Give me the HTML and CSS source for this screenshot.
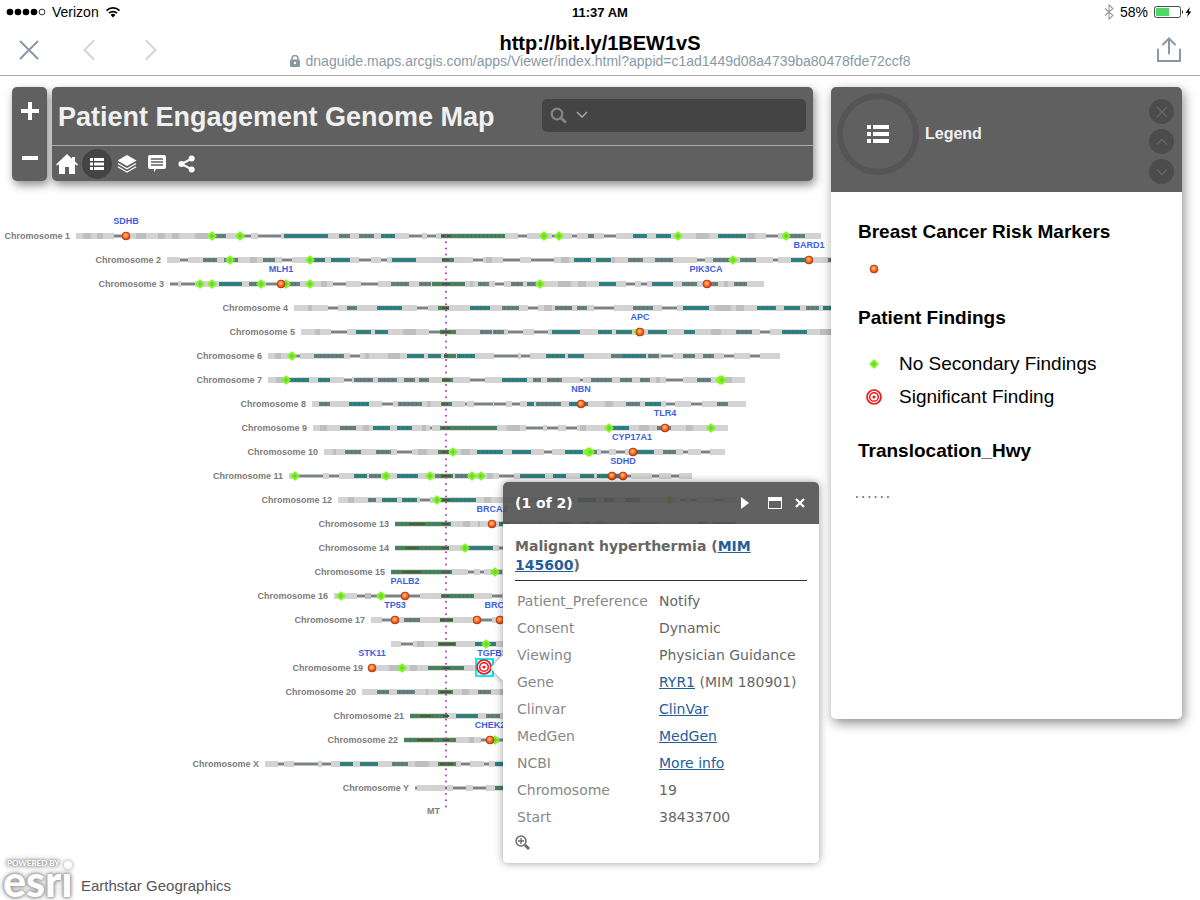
FILE: index.html
```
<!DOCTYPE html>
<html lang="en">
<head>
<meta charset="utf-8">
<title>Patient Engagement Genome Map</title>
<link rel="stylesheet" href="styles.css">
</head>

<body>

<div class="statusBar">
	<div class="statusLeft">
		<svg width="40" height="10" viewBox="0 0 40 10" aria-hidden="true">
			<circle cx="4" cy="5" r="3.3"/><circle cx="12" cy="5" r="3.3"/><circle cx="20" cy="5" r="3.3"/><circle cx="28" cy="5" r="3.3"/>
			<circle cx="36" cy="5" r="2.9" fill="none" stroke="#000" stroke-width="0.8"/>
		</svg>
		<span>Verizon</span>
		<svg width="16" height="12" viewBox="0 0 16 12" fill="none" stroke="#000" stroke-width="1.7" aria-hidden="true">
			<path d="M1.5 4.6a9.2 9.2 0 0 1 13 0M4 7.2a5.7 5.7 0 0 1 8 0"/>
			<path d="M8 11.4L5.6 9a3.4 3.4 0 0 1 4.8 0z" fill="#000" stroke="none"/>
		</svg>
	</div>
	<div class="clock">11:37 AM</div>
	<div class="statusRight">
		<svg width="10" height="16" viewBox="0 0 10 16" fill="none" stroke="#999" stroke-width="1.1" aria-hidden="true"><path d="M1 4.5l8 7L5 15V1l4 3.5-8 7"/></svg>
		<span>58%</span>
		<svg width="40" height="12" viewBox="0 0 40 12" aria-hidden="true">
			<rect x="0.5" y="0.5" width="26" height="11" rx="2" fill="#fff" stroke="#333" stroke-width="0.9"/>
			<rect x="2" y="2" width="13" height="8" fill="#4cd964"/>
			<path d="M28 4q2 2 0 4z"/>
			<path d="M36 1l-4.500 5.800h2.700l-1.200 4.500 4.300-5.900h-2.500z"/>
		</svg>
	</div>
</div>

<div class="browserBar">
	<div class="browserNav">
		<button type="button" class="iconButton" aria-label="Close"><svg width="20" height="20" viewBox="0 0 20 20"><path d="M1.500 1.500l17 17M18.500 1.500l-17 17"/></svg></button>
		<button type="button" class="iconButton faded" aria-label="Back"><svg width="12" height="20" viewBox="0 0 12 20"><path d="M10.500 1L1.500 10l9 9"/></svg></button>
		<button type="button" class="iconButton faded" aria-label="Forward"><svg width="12" height="20" viewBox="0 0 12 20"><path d="M1.500 1l9 9-9 9"/></svg></button>
	</div>
	<div class="browserTitle">
		<div class="shortUrl">http://bit.ly/1BEW1vS</div>
		<div class="fullUrl">
			<svg width="10" height="12" viewBox="0 0 10 12" aria-hidden="true"><path d="M2 5V3.500a3 3 0 0 1 6 0V5" fill="none" stroke="#8899a6" stroke-width="1.500"/><rect y="4.500" width="10" height="7.500" rx="1" fill="#8899a6"/><circle cx="5" cy="8" r="1.200" fill="#fff"/></svg>
			<span>dnaguide.maps.arcgis.com/apps/Viewer/index.html?appid=c1ad1449d08a4739ba80478fde72ccf8</span>
		</div>
	</div>
	<div class="browserShare">
		<button type="button" class="iconButton" aria-label="Share page"><svg width="24" height="26" viewBox="0 0 24 26"><path d="M1 12.500V24h22V12.500M12 16.500V2M6 7.500L12 1.500l6 6"/></svg></button>
	</div>
</div>

<div class="mapStage">

	<svg class="map" id="map" role="img" aria-label="Chromosome map">
		<defs>
			<radialGradient id="riskFill" cx="45%" cy="40%" r="60%">
				<stop offset="0" stop-color="#ffd08a"/><stop offset="0.45" stop-color="#ff8030"/><stop offset="1" stop-color="#e03010"/>
			</radialGradient>
			<symbol id="risk" viewBox="-5 -5 10 10"><circle r="3.900" fill="url(#riskFill)" stroke="#b83410" stroke-width="0.9"/></symbol>
			<symbol id="clear" viewBox="-5 -5 10 10"><path d="M0-3.600L3.600 0 0 3.600-3.600 0z" fill="#72c472" stroke="#7cfc0a" stroke-width="1.900"/></symbol>
			<symbol id="significant" viewBox="-8 -8 16 16"><circle r="7" fill="#fff" stroke="#f01818" stroke-width="1.700"/><circle r="4.300" fill="none" stroke="#f01818" stroke-width="1.500"/><circle r="1.600" fill="#f01818"/></symbol>
		</defs>
	</svg>

	<div class="overlay">
		<div class="zoomBox">
			<button type="button" class="zoomButton" aria-label="Zoom in"><svg width="20" height="20" viewBox="0 0 20 20"><path d="M1 10h18M10 1v18"/></svg></button>
			<button type="button" class="zoomButton" aria-label="Zoom out"><svg width="20" height="20" viewBox="0 0 20 20"><path d="M2 10h16"/></svg></button>
		</div>

		<div class="header">
			<div class="headerTop">
				<h1 class="pageTitle">Patient Engagement Genome Map</h1>
				<form class="search">
					<button type="button" class="iconButton" aria-label="Search"><svg width="17" height="17" viewBox="0 0 17 17" fill="none" stroke="#858585"><circle cx="7" cy="7" r="5.300" stroke-width="2.200"/><path d="M11 11l5 4.500" stroke-width="2.800"/></svg></button>
					<button type="button" class="iconButton" aria-label="Search options"><svg width="12" height="8" viewBox="0 0 12 8" fill="none" stroke="#b0b0b0" stroke-width="1.300"><path d="M1 1l5 5 5-5"/></svg></button>
					<input class="searchInput" type="text" aria-label="Find address or place">
				</form>
			</div>
			<div class="tools">
				<button type="button" class="tool" aria-label="Default extent"><svg width="22" height="20" viewBox="0 0 22 20"><path d="M11 0L0 10.500l1.200 1L3 10.200V20h6v-7h4v7h6v-9.800l1.800 1.300 1.200-1-3-3V3h-3v1.700z"/></svg></button>
				<button type="button" class="tool active" aria-label="Legend"><svg width="14" height="12" viewBox="0 0 14 12"><path d="M0 0h3v3H0zM4 0h10v3H4zM0 4.500h3v3H0zM4 4.500h10v3H4zM0 9h3v3H0zM4 9h10v3H4z"/></svg></button>
				<button type="button" class="tool" aria-label="Layers"><svg width="20" height="18" viewBox="0 0 20 18"><path d="M10 0l9.500 5.500L10 11 .5 5.500z"/><path d="M1 8.500l9 5.200 9-5.200M1 11.800l9 5.200 9-5.200" fill="none" stroke="#fff" stroke-width="1.300"/></svg></button>
				<button type="button" class="tool" aria-label="Details"><svg width="18" height="18" viewBox="0 0 18 18"><path d="M2 0h14q2 0 2 2v10q0 2-2 2H8l-2 3.500V14H2q-2 0-2-2V2q0-2 2-2z"/><path d="M3 4h12M3 7h12M3 10h12" stroke="#606060" stroke-width="1.300"/></svg></button>
				<button type="button" class="tool" aria-label="Share"><svg width="18" height="18" viewBox="0 0 18 18"><path d="M14 3.500L3.500 9 14 14.500" fill="none" stroke="#fff" stroke-width="2"/><circle cx="3.500" cy="9" r="3"/><circle cx="13.700" cy="3.500" r="3"/><circle cx="13.700" cy="14.500" r="3"/></svg></button>
			</div>
		</div>

		<div class="panel">
			<div class="panelHeader">
				<div class="panelBadge"><svg width="22" height="18" viewBox="0 0 22 18" fill="#fff" aria-hidden="true"><path d="M0 0h4v4H0zM6 0h16v4H6zM0 7h4v4H0zM6 7h16v4H6zM0 14h4v4H0zM6 14h16v4H6z"/></svg></div>
				<h2 class="panelTitle">Legend</h2>
				<div class="panelButtons">
					<button type="button" class="roundButton" aria-label="Close legend"><svg width="12" height="12" viewBox="0 0 12 12"><path d="M1 1l10 10M11 1L1 11"/></svg></button>
					<button type="button" class="roundButton" aria-label="Previous"><svg width="12" height="12" viewBox="0 0 12 12"><path d="M1 8.500l5-5 5 5"/></svg></button>
					<button type="button" class="roundButton" aria-label="Next"><svg width="12" height="12" viewBox="0 0 12 12"><path d="M1 3.500l5 5 5-5"/></svg></button>
				</div>
			</div>
			<div class="legend">
				<h3 class="legendTitle">Breast Cancer Risk Markers</h3>
				<div class="legendItem"><svg class="swatch" width="16" height="16" viewBox="0 0 16 16"><use href="#risk" x="3" y="3" width="10" height="10"/></svg></div>
				<h3 class="legendTitle">Patient Findings</h3>
				<div class="legendItem"><svg class="swatch" width="16" height="16" viewBox="0 0 16 16"><use href="#clear" x="3" y="3" width="10" height="10"/></svg>No Secondary Findings</div>
				<div class="legendItem"><svg class="swatch" width="16" height="16" viewBox="0 0 16 16"><use href="#significant" width="16" height="16"/></svg>Significant Finding</div>
				<h3 class="legendTitle">Translocation_Hwy</h3>
				<div class="legendItem"><svg width="34" height="4" viewBox="0 0 34 4"><path class="highway" d="M1 2h32"/></svg></div>
			</div>
		</div>
	</div>

	<div class="popup">
		<div class="popupHeader">
			<span class="popupCount">(1 of 2)</span>
			<button type="button" class="iconButton" aria-label="Next feature"><svg width="8" height="12" viewBox="0 0 8 12"><path d="M0 0l8 6-8 6z" fill="#fff"/></svg></button>
			<button type="button" class="iconButton" aria-label="Maximize"><svg width="14" height="12" viewBox="0 0 14 12"><path d="M0 0h14v12H0zM1 4v7h12V4z" fill="#fff" fill-rule="evenodd"/></svg></button>
			<button type="button" class="iconButton" aria-label="Close popup"><svg width="10" height="10" viewBox="0 0 10 10"><path d="M1 1l8 8M9 1L1 9" stroke="#fff" stroke-width="2.200"/></svg></button>
		</div>
		<div class="popupBody">
			<h2 class="popupTitle">Malignant hyperthermia (<a href="#mim">MIM 145600</a>)</h2>
			<table class="attributes">
				<tr><th scope="row">Patient_Preference</th><td>Notify</td></tr>
				<tr><th scope="row">Consent</th><td>Dynamic</td></tr>
				<tr><th scope="row">Viewing</th><td>Physician Guidance</td></tr>
				<tr><th scope="row">Gene</th><td><a href="#ryr1">RYR1</a> (MIM 180901)</td></tr>
				<tr><th scope="row">Clinvar</th><td><a href="#clinvar">ClinVar</a></td></tr>
				<tr><th scope="row">MedGen</th><td><a href="#medgen">MedGen</a></td></tr>
				<tr><th scope="row">NCBI</th><td><a href="#ncbi">More info</a></td></tr>
				<tr><th scope="row">Chromosome</th><td>19</td></tr>
				<tr><th scope="row">Start</th><td>38433700</td></tr>
			</table>
			<button type="button" class="iconButton" aria-label="Zoom to"><svg width="15" height="15" viewBox="0 0 15 15" fill="none" stroke="#6a6a6a"><circle cx="6" cy="6" r="5" stroke-width="1.500"/><path d="M3 6h6M6 3v6" stroke-width="1.300"/><path d="M10 10l4 4" stroke-width="2.800"/></svg></button>
		</div>
	</div>

	<div class="attribution">
		<div class="esriLogo">
			<span class="poweredBy">POWERED BY</span>
			<span class="esri">esr&#305;</span>
		</div>
		<span>Earthstar Geographics</span>
	</div>
</div>

<script src="map.js"></script>
</body>
</html>
```
FILE: styles.css
```
* {
	box-sizing: border-box;
}

body {
	margin: 0;
	min-height: 100vh;
	display: flex;
	flex-direction: column;
	background: #fff;
	color: #000;
	font-family: "Liberation Sans", Arial, Helvetica, sans-serif;
}

h1, h2, h3 {
	margin: 0;
}

svg {
	display: block;
	flex: none;
}

.iconButton {
	display: flex;
	padding: 0;
	border: 0;
	background: none;
}

/* device status bar */

.statusBar {
	display: grid;
	grid-template-columns: 1fr auto 1fr;
	align-items: center;
	height: 24px;
	padding: 0 6px;
	font-size: 14px;
}

.statusLeft, .statusRight {
	display: flex;
	align-items: center;
	gap: 6px;
}

.statusRight {
	justify-content: flex-end;
}

.clock {
	font-size: 13px;
	font-weight: bold;
}

/* browser bar */

.browserBar {
	display: grid;
	grid-template-columns: 1fr auto 1fr;
	align-items: center;
	height: 52px;
	padding: 0 19px;
	border-bottom: 1px solid #aaa;
}

.browserNav {
	display: flex;
	gap: 50px;
}

.browserNav svg, .browserShare svg {
	fill: none;
	stroke: #8899a6;
	stroke-width: 2;
	stroke-linecap: round;
}

.browserNav .faded:nth-child(2) {
	margin-left: -6px;
}

.faded {
	opacity: 0.4;
}

.browserShare {
	display: flex;
	justify-content: flex-end;
}

.browserTitle {
	padding-top: 3px;
	text-align: center;
}

.shortUrl {
	font-size: 20px;
	line-height: 20px;
	font-weight: bold;
}

.fullUrl {
	display: flex;
	align-items: center;
	justify-content: center;
	gap: 6px;
	font-size: 14px;
	line-height: 16px;
	color: #8899a6;
}

/* map */

.mapStage {
	position: relative;
	flex: 1;
	display: flex;
	flex-direction: column;
	justify-content: space-between;
}

.map {
	position: absolute;
	inset: 0;
	width: 100%;
	height: 100%;
}

.highway {
	fill: none;
	stroke: #a83cc0;
	stroke-width: 2;
	stroke-linecap: round;
	stroke-dasharray: 0 6.2;
}

.chromosomeLabel, .geneLabel {
	font-size: 9px;
	font-weight: bold;
	fill: #7c7c7c;
	text-anchor: end;
}

.geneLabel {
	fill: #3c5fe0;
	text-anchor: middle;
}

.light { fill: #d3d3d3; }
.mid { fill: #bfbfbf; }
.gap { fill: #fff; }
.edge { fill: #dcdcdc; }
.thin { fill: #7c8484; }
.slate { fill: #667f7f; }
.teal { fill: #2f8080; }
.green { fill: #468560; }
.olive { fill: #4c5a2c; }
.selection { fill: #fff; stroke: #00f0ff; stroke-width: 2; }

.grain {
	stroke: #4a5c50;
	stroke-width: 1;
	stroke-dasharray: 1 3;
}

.overlay {
	position: relative;
	display: flex;
	align-items: flex-start;
	padding: 11px 18px 0 12px;
}

.zoomBox, .header {
	border-radius: 5px;
	background: #606060;
	box-shadow: 2px 4px 10px rgba(0, 0, 0, 0.45);
}

.zoomBox {
	display: flex;
	flex-direction: column;
	justify-content: space-between;
	width: 35px;
	height: 94px;
	margin-right: 5px;
}

.zoomButton {
	display: flex;
	align-items: center;
	justify-content: center;
	height: 47px;
	padding: 0 0 0 1px;
	border: 0;
	background: none;
}

.zoomButton svg {
	stroke: #fff;
	stroke-width: 4;
}

.header {
	flex: 1;
	margin-right: 18px;
}

.headerTop {
	display: flex;
	align-items: center;
	justify-content: space-between;
	height: 59px;
	padding: 0 7px 2px 6px;
	border-bottom: 1px solid #aaa;
}

.pageTitle {
	padding-top: 4px;
	font-size: 27px;
	color: #f0f0f0;
}

.search {
	display: flex;
	align-items: center;
	gap: 9px;
	width: 264px;
	height: 33px;
	padding: 0 8px;
	border-radius: 5px;
	background: #444;
}

.searchInput {
	flex: 1;
	min-width: 0;
	border: 0;
	background: none;
	color: #fff;
	font-size: 14px;
}

.tools {
	display: flex;
	align-items: center;
	height: 35px;
}

.tool {
	display: flex;
	align-items: center;
	justify-content: center;
	width: 30px;
	height: 30px;
	padding: 0;
	border: 0;
	border-radius: 50%;
	background: none;
	fill: #fff;
}

.tool.active {
	background: #444;
}

/* legend panel */

.panel {
	width: 351px;
	min-height: calc(100vh - 268px);
	border-radius: 5px;
	background: #fff;
	box-shadow: 2px 4px 12px rgba(0, 0, 0, 0.45);
}

.panelHeader {
	display: flex;
	height: 105px;
	padding: 6px;
	border-radius: 5px 5px 0 0;
	background: #606060;
}

.panelBadge {
	display: flex;
	align-items: center;
	justify-content: center;
	width: 82px;
	height: 82px;
	border: 6px solid #555;
	border-radius: 50%;
}

.panelTitle {
	flex: 1;
	padding-left: 6px;
	font-size: 16px;
	line-height: 82px;
	color: #f0f0f0;
}

.panelButtons {
	display: flex;
	flex-direction: column;
	gap: 5px;
	padding: 6px 2px 0 0;
}

.roundButton {
	display: flex;
	align-items: center;
	justify-content: center;
	width: 25px;
	height: 25px;
	padding: 0;
	border: 0;
	border-radius: 50%;
	background: #4c4c4c;
}

.roundButton svg {
	fill: none;
	stroke: #666;
	stroke-width: 1.4;
}

.legend {
	padding: 28px 25px;
}

.legendTitle {
	margin: 0 2px 8px;
	font-size: 19px;
	line-height: 24px;
}

.legendItem {
	display: flex;
	align-items: center;
	gap: 17px;
	height: 33px;
	font-size: 19px;
}

.legendItem + .legendTitle {
	margin-top: 21px;
	margin-bottom: 17px;
}

.legendTitle:last-of-type {
	margin-top: 26px;
}

.swatch {
	margin-left: 10px;
}

/* popup */

.popup {
	position: absolute;
	z-index: 1;
	left: 503px;
	top: 406px;
	width: 316px;
	border-radius: 5px;
	box-shadow: 0 0 8px rgba(0, 0, 0, 0.4);
	font-family: "DejaVu Sans", Verdana, sans-serif;
	font-size: 14px;
	color: #666;
}

/* pointer to the selected marker */
.popup::before {
	content: "";
	position: absolute;
	z-index: -1;
	left: -9px;
	top: 177px;
	width: 18px;
	height: 18px;
	background: #fff;
	box-shadow: 0 0 6px rgba(0, 0, 0, 0.4);
	transform: rotate(45deg);
}

.popupHeader {
	display: flex;
	align-items: center;
	gap: 13px;
	height: 42px;
	padding: 0 14px 0 12px;
	border-radius: 5px 5px 0 0;
	background: rgba(80, 80, 80, 0.9);
}

.popupHeader .iconButton:nth-child(2) {
	margin-right: 6px;
}

.popupCount {
	flex: 1;
	font-weight: bold;
	color: #fff;
}

.popupBody {
	padding: 13px 12px;
	border-radius: 0 0 5px 5px;
	background: #fff;
}

.popupTitle {
	padding-bottom: 5px;
	border-bottom: 1px solid #333;
	margin-bottom: 6px;
	font-size: 14px;
	line-height: 19px;
}

.popup a {
	color: #245d99;
}

.attributes {
	width: 100%;
	border-collapse: collapse;
}

.attributes th, .attributes td {
	height: 27px;
	padding: 0 0 0 2px;
	font-weight: normal;
	text-align: left;
	white-space: nowrap;
}

.attributes th {
	width: 142px;
	color: #888;
}

.popupBody > .iconButton {
	margin-top: 5px;
}

/* attribution */

.attribution {
	position: relative;
	display: flex;
	align-items: flex-end;
	gap: 8px;
	padding: 0 3px 5px;
	font-size: 15px;
	line-height: 18px;
	color: #555;
}

.esriLogo {
	position: relative;
	display: flex;
	flex-direction: column;
	width: 70px;
	font-family: Lato, sans-serif;
	font-weight: 900;
	color: #fff;
	text-shadow: 0 0 2px #999, 0 0 3px #999, 0 0 4px #aaa, 0 0 6px #aaa;
}

/* large dot of the logo's i */
.esriLogo::after {
	content: "";
	position: absolute;
	right: 1px;
	top: 2px;
	width: 8px;
	height: 8px;
	border-radius: 50%;
	background: #fff;
	box-shadow: 0 0 4px #888;
}

.poweredBy {
	padding-left: 4px;
	font-size: 8px;
	line-height: 8px;
}

.esri {
	font-size: 43px;
	line-height: 28px;
}
```
FILE: map.js
```
var SVG_NS = "http://www.w3.org/2000/svg";
var map = document.getElementById("map");
var FIRST_ROW = 160;
var ROW_STEP = 24;
var CENTROMERE = 446;

var bandTypes = {
	d: { name: "mid", height: 6 },
	s: { name: "thin", height: 3, back: "gap" },
	g: { name: "slate", height: 4, back: "edge", grain: true },
	t: { name: "teal", height: 4, back: "edge", grain: true },
	n: { name: "green", height: 4, back: "edge", grain: true },
	o: { name: "olive", height: 2 }
};

// each chromosome: name, start, end, bands (type start-end), clear markers, risk markers
var chromosomes = [
	["Chromosome 1", 76, 821, "d83-91 d97-103 s114-126 d136-146 d158-165 d172-179 d195-208 g209-226 s243-251 s258-281 t284-328 g339-350 g359-374 t381-395 s409-422 s427-436 n441-505 o441-451 s518-527 s552-556 s572-577 g588-594 s604-616 t633-647 t656-671 d696-709 t718-746 d748-755 s766-778 g789-805", [212, 240, 544, 559, 678, 786], [126]],
	["Chromosome 2", 167, 840, "s180-188 g203-217 g224-238 d250-257 g263-275 s282-292 t308-325 t331-350 s359-371 s381-387 t392-416 n442-454 o442-449 s473-483 d486-492 s503-520 s531-554 d561-569 t574-591 t596-611 d612-615 g628-643 g655-673 s697-705 g713-735 g740-756 s773-778 t791-808 g828-840", [230, 310, 733], [809]],
	["Chromosome 3", 170, 764, "s170-178 s181-195 t219-242 g249-262 s266-278 g285-300 d321-327 s333-346 s361-378 g391-409 g419-431 n432-465 o442-450 d470-473 g478-489 s495-504 g511-523 g527-536 d558-571 d578-586 t599-616 s626-635 s641-647 t652-673 g682-697 g709-718 d724-728 g734-747", [200, 212, 261, 286, 310, 540], [281, 707]],
	["Chromosome 4", 294, 840, "d308-312 s328-338 g347-357 t377-402 s417-428 n438-449 o442-449 t470-490 g502-519 s528-538 d544-552 g555-572 g577-587 s594-614 g633-653 s662-677 t683-709 d715-731 d736-744 t757-776 t784-800 g806-819 t823-840", [], []],
	["Chromosome 5", 301, 840, "d315-320 s331-347 t356-371 t375-388 d403-416 s429-440 n440-456 o441-451 g480-492 g493-504 s508-523 s534-548 t552-580 t598-612 t616-632 t648-667 t684-695 d711-721 g736-752 s760-770 t782-807 d820-831", [638], [640]],
	["Chromosome 6", 268, 780, "d275-281 s294-300 g314-344 s350-360 d365-369 d388-400 t407-424 t428-441 n444-456 o444-448 t457-475 s494-518 s521-530 t546-565 t568-584 g611-622 t622-646 g648-659 s661-673 g683-695 g703-714 s724-734 s750-760", [292], []],
	["Chromosome 7", 268, 745, "d276-283 t289-309 t318-330 s344-352 g354-373 g378-397 g404-415 g419-429 n442-453 o442-450 s470-485 t502-527 g533-541 g547-562 s580-583 g591-612 g620-632 g640-650 d656-660 s666-683 g697-711 d725-732", [286, 720, 722], []],
	["Chromosome 8", 312, 746, "g319-330 t349-369 s382-393 g398-422 d427-431 n441-452 o442-448 s465-467 s474-493 s494-506 s512-520 t527-534 g536-561 t569-588 d605-613 g626-640 t645-661 s666-675 s691-702 g717-728", [], [581]],
	["Chromosome 9", 313, 728, "d320-327 g340-356 d363-369 t373-390 t397-412 d422-426 s430-432 n440-497 o442-450 d507-520 s526-543 s547-558 s566-577 d580-586 t609-629 d639-649 g657-671 d686-693", [609, 711], [665]],
	["Chromosome 10", 324, 725, "d333-336 g345-361 g376-391 s397-412 d418-427 n438-449 o442-449 d461-470 t477-503 t512-531 s544-552 t565-583 g590-597 s601-609 s616-625 t635-654 g663-676 s683-688 s701-710", [453, 588, 590], [633]],
	["Chromosome 11", 289, 692, "s297-323 s329-339 t354-367 g369-381 t397-418 g435-441 n441-453 o441-451 g455-468 d487-493 s499-514 t520-545 t553-566 t580-594 t597-620 s624-631 s652-659 s671-679", [295, 386, 430, 472, 481], [612, 623]],
	["Chromosome 12", 338, 737, "d348-354 g368-376 t382-397 t402-417 s420-430 n438-450 o442-450 t450-476 d484-491 t578-596 g604-614 g625-640 s680-686 s691-697 s714-724", [437, 670], []],
	["Chromosome 13", 395, 737, "n395-451 o409-425 o442-449 d463-470 d478-480 t499-510 g559-572 g580-590 g595-605 g631-660 g698-707 g713-735", [540], [492]],
	["Chromosome 14", 395, 520, "n395-449 o405-419 o442-449 t468-493 s499-503", [465], []],
	["Chromosome 15", 391, 520, "n391-452 o402-421 o442-450 s468-474 s480-484 g491-502", [495], []],
	["Chromosome 16", 334, 520, "s357-365 d365-371 s371-377 s384-420 n441-474 o442-449 s492-502", [341, 381], [405]],
	["Chromosome 17", 371, 520, "s382-391 g404-420 n440-453 o440-453 s478-492", [], [395, 477, 500]],
	["", 391, 520, "s401-413 d417-424 n438-456 o439-455 t475-496", [486], []],
	["Chromosome 19", 369, 492, "d389-400 d410-417 n428-464 o442-450", [402], [372, 490]],
	["Chromosome 20", 362, 520, "g377-389 g397-415 d426-428 n438-453 o440-451 d462-469 g478-491 d500-510", [], []],
	["Chromosome 21", 410, 520, "n410-448 o420-431 o443-449 t456-478 g486-500", [], []],
	["Chromosome 22", 404, 520, "n404-456 o417-433 o443-449 d469-474 s481-493 s499-510", [495], [490]],
	["Chromosome X", 265, 520, "s278-284 s294-318 s322-331 t340-353 t360-378 g392-408 d415-429 n438-456 o440-453 s461-470 s484-489 t495-510", [], []],
	["Chromosome Y", 415, 520, "s415-417 s445-447 s453-466 s473-486 n495-510", [], []]
];

// gene name, x, row of its chromosome
var genes = [
	["SDHB", 126, 0], ["BARD1", 809, 1], ["MLH1", 281, 2], ["PIK3CA", 706, 2],
	["APC", 640, 4], ["NBN", 581, 7], ["TLR4", 665, 8], ["CYP17A1", 632, 9],
	["SDHD", 623, 10], ["BRCA2", 492, 12], ["PALB2", 405, 15], ["TP53", 395, 16],
	["BRCA1", 500, 16], ["STK11", 372, 18], ["TGFB1", 492, 18], ["CHEK2", 490, 21]
];

function add(tag, attributes, text) {
	var node = document.createElementNS(SVG_NS, tag);
	for (var key in attributes) {
		node.setAttribute(key, attributes[key]);
	}
	if (text) {
		node.textContent = text;
	}
	map.appendChild(node);
}

function bar(name, start, end, y, height) {
	add("rect", { "class": name, x: start, y: y - height / 2, width: end - start, height: height });
}

function marker(id, x, y, size) {
	add("use", { href: "#" + id, x: x - size / 2, y: y - size / 2, width: size, height: size });
}

function rowY(row) {
	return FIRST_ROW + row * ROW_STEP;
}

chromosomes.forEach(function (chromosome, row) {
	var y = rowY(row);
	add("text", { "class": "chromosomeLabel", x: chromosome[1] - 6, y: y + 3 }, chromosome[0]);
	bar("light", chromosome[1], chromosome[2], y, 6);
	chromosome[3].split(" ").forEach(function (band) {
		var type = bandTypes[band[0]];
		var ends = band.slice(1).split("-").map(Number);
		if (type.back) {
			bar(type.back, ends[0], ends[1], y, 6);
		}
		bar(type.name, ends[0], ends[1], y, type.height);
		if (type.grain) {
			add("path", { "class": "grain", d: "M" + (ends[0] + 2) + " " + y + "H" + (ends[1] - 1) });
		}
	});
});

add("path", { "class": "highway", d: "M" + CENTROMERE + " " + FIRST_ROW + "V736" });
add("text", { "class": "chromosomeLabel", x: 440, y: 738 }, "MT");

chromosomes.forEach(function (chromosome, row) {
	chromosome[4].forEach(function (x) { marker("clear", x, rowY(row), 10); });
	chromosome[5].forEach(function (x) { marker("risk", x, rowY(row), 10); });
});

genes.forEach(function (gene) {
	add("text", { "class": "geneLabel", x: gene[1], y: rowY(gene[2]) - 12 }, gene[0]);
});

// selected finding on chromosome 19
add("rect", { "class": "selection", x: 476, y: rowY(18) - 9, width: 17, height: 17 });
marker("significant", 484, rowY(18) - 1, 16);
```
